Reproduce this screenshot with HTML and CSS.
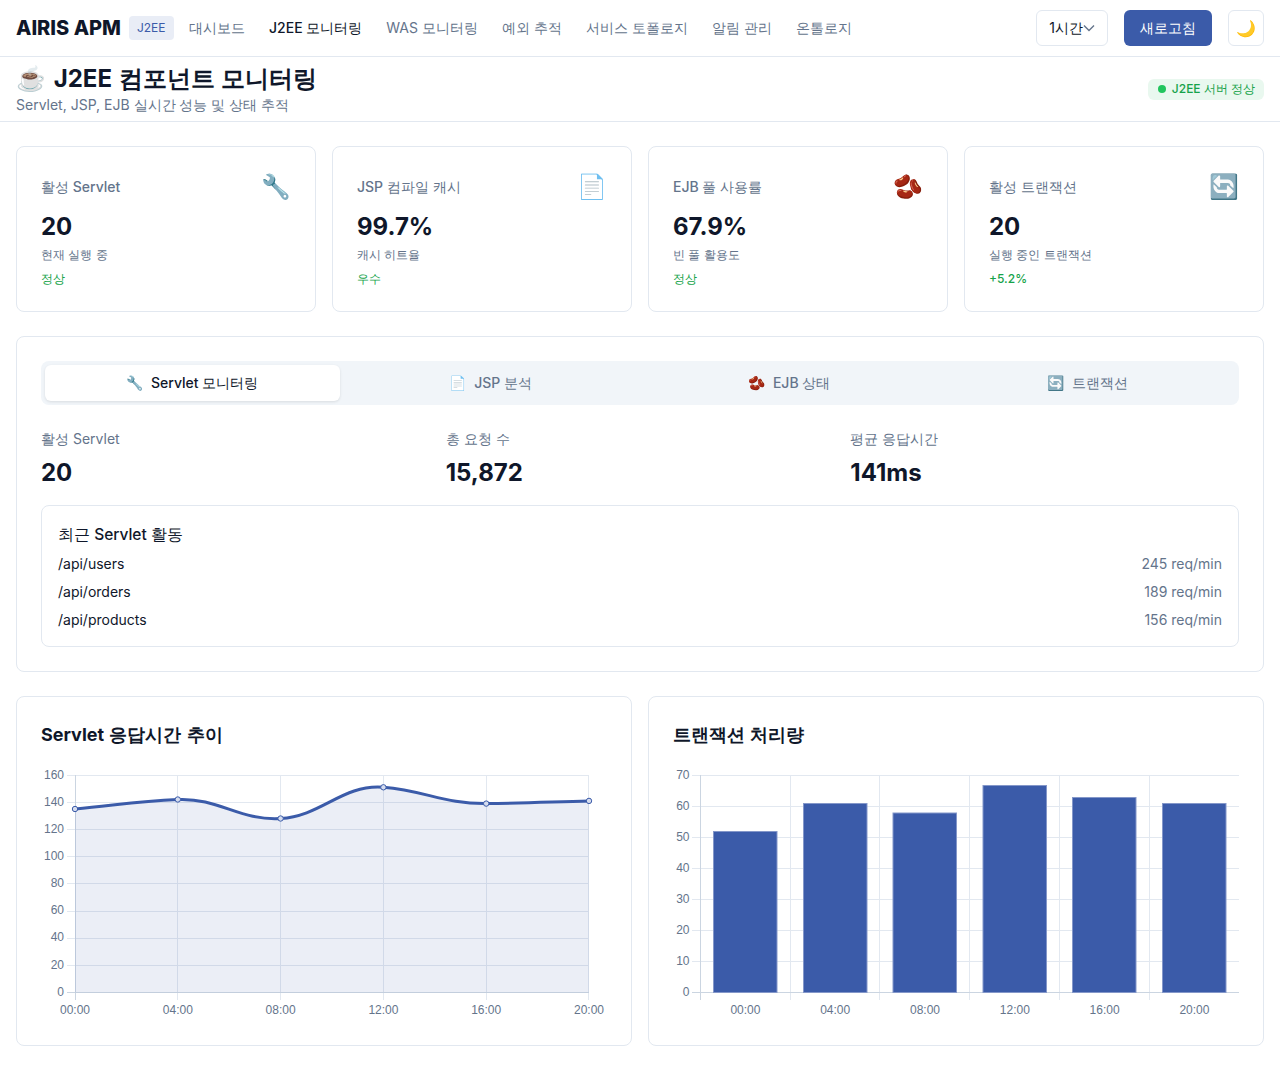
FILE: index.html
```html
<!DOCTYPE html>
<html lang="ko">
<head>
  <meta charset="UTF-8" />
  <meta name="viewport" content="width=device-width, initial-scale=1.0" />
  <title>AIRIS APM - J2EE 모니터링</title>
  <link rel="stylesheet" href="styles.css">
</head>
<body>
  <header class="topbar">
    <div class="brand">AIRIS APM</div>
    <span class="brand-badge">J2EE</span>
    <nav class="nav">
      <a>대시보드</a>
      <a class="active">J2EE 모니터링</a>
      <a>WAS 모니터링</a>
      <a>예외 추적</a>
      <a>서비스 토폴로지</a>
      <a>알림 관리</a>
      <a>온톨로지</a>
    </nav>
    <div class="topbar-actions">
      <button class="range">1시간<svg width="12" height="12" viewBox="0 0 12 12"><path d="M1 3.5l5 5 5-5" fill="none" stroke="#64748b" stroke-width="1.4"/></svg></button>
      <button class="refresh">새로고침</button>
      <button class="theme">🌙</button>
    </div>
  </header>

  <section class="page-head">
    <div>
      <h1><span>☕</span> J2EE 컴포넌트 모니터링</h1>
      <p>Servlet, JSP, EJB 실시간 성능 및 상태 추적</p>
    </div>
    <span class="server-status"><i></i>J2EE 서버 정상</span>
  </section>

  <main class="content">
    <div class="cards">
      <div class="card">
        <div class="card-top"><span>활성 Servlet</span><em>🔧</em></div>
        <div class="card-value">20</div>
        <div class="card-sub">현재 실행 중</div>
        <div class="card-state">정상</div>
      </div>
      <div class="card">
        <div class="card-top"><span>JSP 컴파일 캐시</span><em>📄</em></div>
        <div class="card-value">99.7%</div>
        <div class="card-sub">캐시 히트율</div>
        <div class="card-state">우수</div>
      </div>
      <div class="card">
        <div class="card-top"><span>EJB 풀 사용률</span><em>🫘</em></div>
        <div class="card-value">67.9%</div>
        <div class="card-sub">빈 풀 활용도</div>
        <div class="card-state">정상</div>
      </div>
      <div class="card">
        <div class="card-top"><span>활성 트랜잭션</span><em>🔄</em></div>
        <div class="card-value">20</div>
        <div class="card-sub">실행 중인 트랜잭션</div>
        <div class="card-state">+5.2%</div>
      </div>
    </div>

    <section class="panel">
      <div class="tabs">
        <button class="tab active"><span>🔧</span> Servlet 모니터링</button>
        <button class="tab"><span>📄</span> JSP 분석</button>
        <button class="tab"><span>🫘</span> EJB 상태</button>
        <button class="tab"><span>🔄</span> 트랜잭션</button>
      </div>
      <div class="stats">
        <div><div class="stat-label">활성 Servlet</div><div class="stat-value">20</div></div>
        <div><div class="stat-label">총 요청 수</div><div class="stat-value">15,872</div></div>
        <div><div class="stat-label">평균 응답시간</div><div class="stat-value">141ms</div></div>
      </div>
      <div class="activity">
        <h4>최근 Servlet 활동</h4>
        <div class="activity-row"><span>/api/users</span><span class="rate">245 req/min</span></div>
        <div class="activity-row"><span>/api/orders</span><span class="rate">189 req/min</span></div>
        <div class="activity-row"><span>/api/products</span><span class="rate">156 req/min</span></div>
      </div>
    </section>

    <div class="charts">
      <section class="chart-card">
        <h3>Servlet 응답시간 추이</h3>
        <svg class="chart" width="566" height="256" viewBox="41 765 566 256">
          <g class="grid">
            <path d="M67 775.5H589M67 802.5H589M67 829.5H589M67 856.5H589M67 883.5H589M67 911.5H589M67 938.5H589M67 965.5H589"/>
            <path d="M177.5 775V1000M280.5 775V1000M383.5 775V1000M486.5 775V1000M588.5 775V1000"/>
          </g>
          <g class="axis">
            <path d="M75.5 775V1000M67 992.5H589"/>
          </g>
          <path class="line-fill" d="M75 809C116.1 805.2 136.7 801.4 177.8 799.5C218.9 797.6 239.5 820.9 280.6 818.5C321.7 816.1 342.3 784 383.4 787.3C424.5 790.6 445.1 804.1 486.2 803.6C527.3 803.1 547.9 802 589 800.9V992.5H75Z"/>
          <path class="line" d="M75 809C116.1 805.2 136.7 801.4 177.8 799.5C218.9 797.6 239.5 820.9 280.6 818.5C321.7 816.1 342.3 784 383.4 787.3C424.5 790.6 445.1 804.1 486.2 803.6C527.3 803.1 547.9 802 589 800.9"/>
          <g class="dots">
            <circle cx="75" cy="809" r="2.7"/>
            <circle cx="177.8" cy="799.5" r="2.7"/>
            <circle cx="280.6" cy="818.5" r="2.7"/>
            <circle cx="383.4" cy="787.3" r="2.7"/>
            <circle cx="486.2" cy="803.6" r="2.7"/>
            <circle cx="589" cy="800.9" r="2.7"/>
          </g>
          <g class="ylabels">
            <text x="64" y="779">160</text>
            <text x="64" y="806">140</text>
            <text x="64" y="833">120</text>
            <text x="64" y="860">100</text>
            <text x="64" y="887">80</text>
            <text x="64" y="914">60</text>
            <text x="64" y="941">40</text>
            <text x="64" y="969">20</text>
            <text x="64" y="996">0</text>
          </g>
          <g class="xlabels">
            <text x="75" y="1014">00:00</text>
            <text x="177.8" y="1014">04:00</text>
            <text x="280.6" y="1014">08:00</text>
            <text x="383.4" y="1014">12:00</text>
            <text x="486.2" y="1014">16:00</text>
            <text x="589" y="1014">20:00</text>
          </g>
        </svg>
      </section>

      <section class="chart-card">
        <h3>트랜잭션 처리량</h3>
        <svg class="chart" width="566" height="256" viewBox="673 765 566 256">
          <g class="grid">
            <path d="M692 775.5H1239M692 806.5H1239M692 837.5H1239M692 868.5H1239M692 899.5H1239M692 930.5H1239M692 961.5H1239"/>
            <path d="M790.5 775V1000M879.5 775V1000M969.5 775V1000M1059.5 775V1000M1149.5 775V1000"/>
          </g>
          <g class="axis">
            <path d="M700.5 775V1000M692 992.5H1239"/>
          </g>
          <g class="bars">
            <rect x="713.5" y="831.5" width="63.5" height="161"/>
            <rect x="803.5" y="803.5" width="63.5" height="189"/>
            <rect x="893" y="813" width="63.5" height="179.5"/>
            <rect x="983" y="785.5" width="63.5" height="207"/>
            <rect x="1072.5" y="797.5" width="63.5" height="195"/>
            <rect x="1162.5" y="803.5" width="63.5" height="189"/>
          </g>
          <g class="ylabels">
            <text x="689.5" y="779">70</text>
            <text x="689.5" y="810">60</text>
            <text x="689.5" y="841">50</text>
            <text x="689.5" y="872">40</text>
            <text x="689.5" y="903">30</text>
            <text x="689.5" y="934">20</text>
            <text x="689.5" y="965">10</text>
            <text x="689.5" y="996">0</text>
          </g>
          <g class="xlabels">
            <text x="745.4" y="1014">00:00</text>
            <text x="835.2" y="1014">04:00</text>
            <text x="925" y="1014">08:00</text>
            <text x="1014.8" y="1014">12:00</text>
            <text x="1104.6" y="1014">16:00</text>
            <text x="1194.4" y="1014">20:00</text>
          </g>
        </svg>
      </section>
    </div>
  </main>
</body>
</html>
```

FILE: styles.css
```css
* { box-sizing: border-box; }
body {
  margin: 0;
  background: #fff;
  color: #0f172a;
  font-family: Inter, sans-serif;
  font-size: 14px;
}
button {
  font-family: inherit;
  cursor: pointer;
}

/* top bar */
.topbar {
  display: flex;
  align-items: center;
  height: 57px;
  padding: 0 16px;
  border-bottom: 1px solid #e2e8f0;
}
.brand {
  font-size: 20px;
  font-weight: 800;
  margin-right: 8px;
}
.brand-badge {
  padding: 4px 8px;
  background: #e9edf6;
  color: #3b5ba9;
  border-radius: 4px;
  font-size: 12px;
  line-height: 16px;
  margin-right: 15.5px;
}
.nav {
  display: flex;
  gap: 24px;
}
.nav a {
  color: #64748b;
}
.nav a.active {
  color: #0f172a;
  font-weight: 500;
}
.topbar-actions {
  display: flex;
  align-items: center;
  gap: 16px;
  margin-left: auto;
}
.range {
  display: flex;
  align-items: center;
  height: 36px;
  padding: 0 12px;
  background: #fff;
  border: 1px solid #e2e8f0;
  border-radius: 6px;
  color: #0f172a;
  font-size: 14px;
}
.refresh {
  width: 88px;
  height: 36px;
  background: #3b5ba9;
  border: 0;
  border-radius: 6px;
  color: #fff;
  font-size: 14px;
}
.theme {
  width: 36px;
  height: 36px;
  padding: 0;
  background: #fff;
  border: 1px solid #e2e8f0;
  border-radius: 6px;
  font-size: 16px;
}

/* page title */
.page-head {
  display: flex;
  align-items: center;
  justify-content: space-between;
  height: 65px;
  padding: 0 16px;
  border-bottom: 1px solid #e2e8f0;
}
.page-head h1 {
  margin: 0;
  font-size: 24px;
  line-height: 32px;
  font-weight: 700;
  word-spacing: 1px;
}
.page-head h1 span {
  margin-right: 1px;
}
.page-head p {
  margin: 0;
  color: #64748b;
  font-size: 14px;
  line-height: 20px;
}
.server-status {
  display: flex;
  align-items: center;
  gap: 6px;
  height: 21px;
  padding: 0 9px 0 10px;
  background: #e9f8ef;
  color: #16a34a;
  border-radius: 6px;
  font-size: 12px;
  font-weight: 500;
}
.server-status i {
  width: 8px;
  height: 8px;
  border-radius: 50%;
  background: #22c55e;
}

.content {
  padding: 24px 16px;
}

/* metric cards */
.cards {
  display: grid;
  grid-template-columns: repeat(4, 1fr);
  gap: 16px;
  margin-bottom: 24px;
}
.card {
  height: 166px;
  padding: 24px;
  border: 1px solid #e2e8f0;
  border-radius: 8px;
}
.card-top {
  display: flex;
  align-items: center;
  justify-content: space-between;
  height: 32px;
  color: #64748b;
  font-size: 14px;
  font-weight: 500;
}
.card-top em {
  font-style: normal;
  font-size: 24px;
  line-height: 32px;
}
.card-value {
  margin-top: 8px;
  font-size: 24px;
  line-height: 32px;
  font-weight: 700;
}
.card-sub {
  color: #64748b;
  font-size: 12px;
  line-height: 24px;
}
.card-state {
  color: #16a34a;
  font-size: 12px;
  line-height: 24px;
  font-weight: 500;
}

/* tab panel */
.panel {
  padding: 24px;
  border: 1px solid #e2e8f0;
  border-radius: 8px;
  margin-bottom: 24px;
}
.tabs {
  display: grid;
  grid-template-columns: repeat(4, 1fr);
  gap: 4px;
  padding: 4px;
  background: #f1f5f9;
  border-radius: 8px;
  margin-bottom: 24px;
}
.tab {
  height: 36px;
  background: none;
  border: 0;
  border-radius: 6px;
  color: #64748b;
  font-size: 14px;
  font-weight: 500;
}
.tab span {
  margin-right: 4px;
}
.tab.active {
  background: #fff;
  color: #0f172a;
  box-shadow: 0 1px 3px rgba(0, 0, 0, 0.1);
}
.stats {
  display: grid;
  grid-template-columns: repeat(3, 1fr);
  gap: 16px;
  margin-bottom: 16px;
}
.stat-label {
  color: #64748b;
  font-size: 14px;
  line-height: 20px;
}
.stat-value {
  margin-top: 8px;
  font-size: 24px;
  line-height: 32px;
  font-weight: 650;
}
.activity {
  padding: 16px;
  border: 1px solid #e2e8f0;
  border-radius: 8px;
}
.activity h4 {
  margin: 0 0 7px;
  font-size: 15.5px;
  line-height: 25px;
  font-weight: 500;
}
.activity-row {
  display: flex;
  justify-content: space-between;
  line-height: 20px;
  margin-top: 8px;
}
.activity h4 + .activity-row {
  margin-top: 0;
}
.rate {
  color: #64748b;
}

/* charts */
.charts {
  display: grid;
  grid-template-columns: repeat(2, 1fr);
  gap: 16px;
}
.chart-card {
  height: 350px;
  padding: 24px;
  border: 1px solid #e2e8f0;
  border-radius: 8px;
}
.chart-card h3 {
  margin: 0 0 16px;
  font-size: 18px;
  line-height: 28px;
  font-weight: 700;
  word-spacing: 1px;
}
.chart {
  display: block;
}
.grid path {
  fill: none;
  stroke: #e2e8f0;
  stroke-width: 1;
}
.axis path {
  fill: none;
  stroke: #cbd5e1;
  stroke-width: 1;
}
.line-fill {
  fill: rgba(59, 91, 169, 0.1);
}
.line {
  fill: none;
  stroke: #3b5ba9;
  stroke-width: 3;
}
.dots circle {
  fill: #d5dcee;
  stroke: #3b5ba9;
  stroke-width: 1;
}
.bars rect {
  fill: #3b5ba9;
  stroke: #8497c9;
  stroke-width: 1;
}
.ylabels text,
.xlabels text {
  fill: #64748b;
  font-family: "Liberation Sans", sans-serif;
  font-size: 12px;
}
.ylabels text {
  text-anchor: end;
}
.xlabels text {
  text-anchor: middle;
}
```
